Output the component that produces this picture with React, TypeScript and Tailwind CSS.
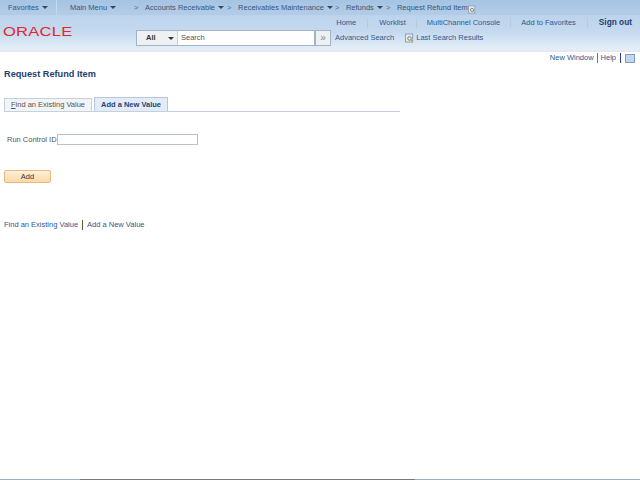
const font = "font-['Liberation_Sans',Arial,sans-serif]"

function Caret() {
  return <span className="ml-[3px] inline-block h-0 w-0 border-x-[3px] border-t-[3px] border-x-transparent border-t-[#33475f]" />
}

function Crumb({ label, className }: { label: string; className: string }) {
  return (
    <div className={`flex items-center ${className}`}>
      <span>{label}</span>
      <Caret />
    </div>
  )
}

function Sep() {
  return <span className="block w-[4px] text-[7.5px] text-[#4f6a8a]">&gt;</span>
}

function Divider() {
  return <span className="block h-[10px] w-px bg-[#b4cbe2]" />
}

function MagnifierDoc({ className }: { className: string }) {
  return (
    <svg className={className} viewBox="0 0 10 10" fill="none">
      <rect x="0.5" y="0.5" width="8" height="9" fill="#dfeaf6" stroke="#7f9fc4" />
      <circle cx="5" cy="5.5" r="2" stroke="#8a7a30" />
      <path d="M6.5 7l2.5 2.5" stroke="#c9a23a" strokeWidth="1.2" />
    </svg>
  )
}

export default function App() {
  return (
    <div className={`relative h-[480px] w-[640px] overflow-hidden bg-white ${font} text-[7.5px] leading-none`}>
      {/* top menu */}
      <div className="flex h-[15px] items-center bg-gradient-to-b from-[#a5c3e3] to-[#b3cde8] text-[#3a5578]">
        <Crumb label="Favorites" className="ml-[8px] w-[48px]" />
        <span className="h-[15px] w-px bg-[#c5d9ee]" />
        <Crumb label="Main Menu" className="ml-[13px] w-[64px]" />
        <Sep />
        <Crumb label="Accounts Receivable" className="ml-[7px]" />
        <span className="ml-[3px]"><Sep /></span>
        <Crumb label="Receivables Maintenance" className="ml-[7px]" />
        <span className="ml-[2px]"><Sep /></span>
        <Crumb label="Refunds" className="ml-[7px]" />
        <span className="ml-[3px]"><Sep /></span>
        <span className="ml-[7px]">Request Refund Item</span>
      </div>

      {/* header */}
      <div className="h-[35px] bg-gradient-to-b from-[#bcd3ec] via-[#c6daef] to-[#e6eff8]">
        <div className="flex h-[15px] items-center justify-end pr-[8px] text-[#2a5a90]">
          <span>Home</span>
          <span className="mx-[11px]"><Divider /></span>
          <span>Worklist</span>
          <span className="mx-[10px]"><Divider /></span>
          <span>MultiChannel Console</span>
          <span className="mx-[10px]"><Divider /></span>
          <span>Add to Favorites</span>
          <span className="mx-[11px]"><Divider /></span>
          <span className="text-[8.3px] font-bold text-[#1c3f6e]">Sign out</span>
        </div>
        <div className="flex h-[20px] items-start">
          <span className="ml-[3px] mt-[-5px] w-[133px] origin-left scale-x-[1.27] text-[13px] tracking-[0.2px] text-[#e3262b]">ORACLE</span>
          <div className="flex h-[16px] w-[179px] items-center border border-[#a4b4c6] bg-white">
            <div className="flex h-full w-[41px] items-center justify-between border-r border-[#c5d0dc] bg-[#edf1f4] pl-[9px] pr-[3px] font-bold text-[#333]">
              <span>All</span>
              <span className="h-0 w-0 border-x-[3px] border-t-[3px] border-x-transparent border-t-[#333]" />
            </div>
            <span className="ml-[3px] text-[#555]">Search</span>
          </div>
          <div className="flex h-[16px] w-[16px] items-center justify-center border border-[#a4b4c6] bg-[#eef1f4] text-[10px] text-[#7d8a99]">»</div>
          <span className="ml-[4px] mt-[4px] text-[#2a5a90]">Advanced Search</span>
          <MagnifierDoc className="ml-[11px] mt-[3px] h-[10px] w-[9px]" />
          <span className="ml-[2px] mt-[4px] text-[#2a5a90]">Last Search Results</span>
        </div>
      </div>
      <div className="h-[2px] bg-[#e4e8ef]" />

      {/* page links */}
      <div className="mt-px flex h-[10px] items-center justify-end pr-[5px] text-[#2a5a90]">
        <span>New Window</span>
        <span className="mx-[3px] h-[10px] w-px bg-[#b5651d]" />
        <span>Help</span>
        <span className="mx-[4px] h-[10px] w-px bg-[#2d3f8f]" />
        <span className="h-[9px] w-[10px] border border-[#7f9fcb] bg-[#c4d6ee]" />
      </div>

      {/* page body */}
      <div className="pl-[4px]">
        <h1 className="mt-[6px] text-[9.2px] font-bold leading-[10px] text-[#1f3f74]">Request Refund Item</h1>

        <div className="mt-[19px] flex h-[14px] w-[396px] items-end gap-[2px] border-b border-[#c3d0de]">
          <div className="flex h-[13px] w-[88px] items-center justify-center border border-b-0 border-[#c3d0de] bg-[#f3f4f5] text-[#555]">
            <span><span className="underline">F</span>ind an Existing Value</span>
          </div>
          <div className="flex h-[14px] w-[74px] items-center justify-center border border-b-0 border-[#b5c8de] bg-[#e3ecf6] font-bold text-[#1f3f74]">
            Add a New Value
          </div>
        </div>

        <div className="mt-[22px] flex items-center pl-[3px]">
          <span className="w-[50px] whitespace-nowrap text-[#555]">Run Control ID</span>
          <div className="h-[11px] w-[141px] border border-[#b9c0c9] bg-white" />
        </div>

        <button className="mt-[25px] block h-[13px] w-[47px] rounded-[2px] border border-[#eeb77c] bg-gradient-to-b from-[#fdf0db] to-[#fbd9a9] text-[7.5px] text-[#333]">
          Add
        </button>

        <div className="mt-[37px] flex items-center text-[#2a5a90]">
          <span>Find an Existing Value</span>
          <span className="mx-[4px] h-[10px] w-px bg-[#5c5c32]" />
          <span>Add a New Value</span>
        </div>
      </div>

      {/* cursor over the menu */}
      <MagnifierDoc className="absolute left-[468px] top-[5px] h-[9px] w-[8px]" />

      {/* window edge */}
      <div className="absolute bottom-0 left-0 flex h-px w-full bg-[#9fb0bf]">
        <div className="ml-[80px] h-px w-[335px] bg-[#747a80]" />
      </div>
    </div>
  )
}
